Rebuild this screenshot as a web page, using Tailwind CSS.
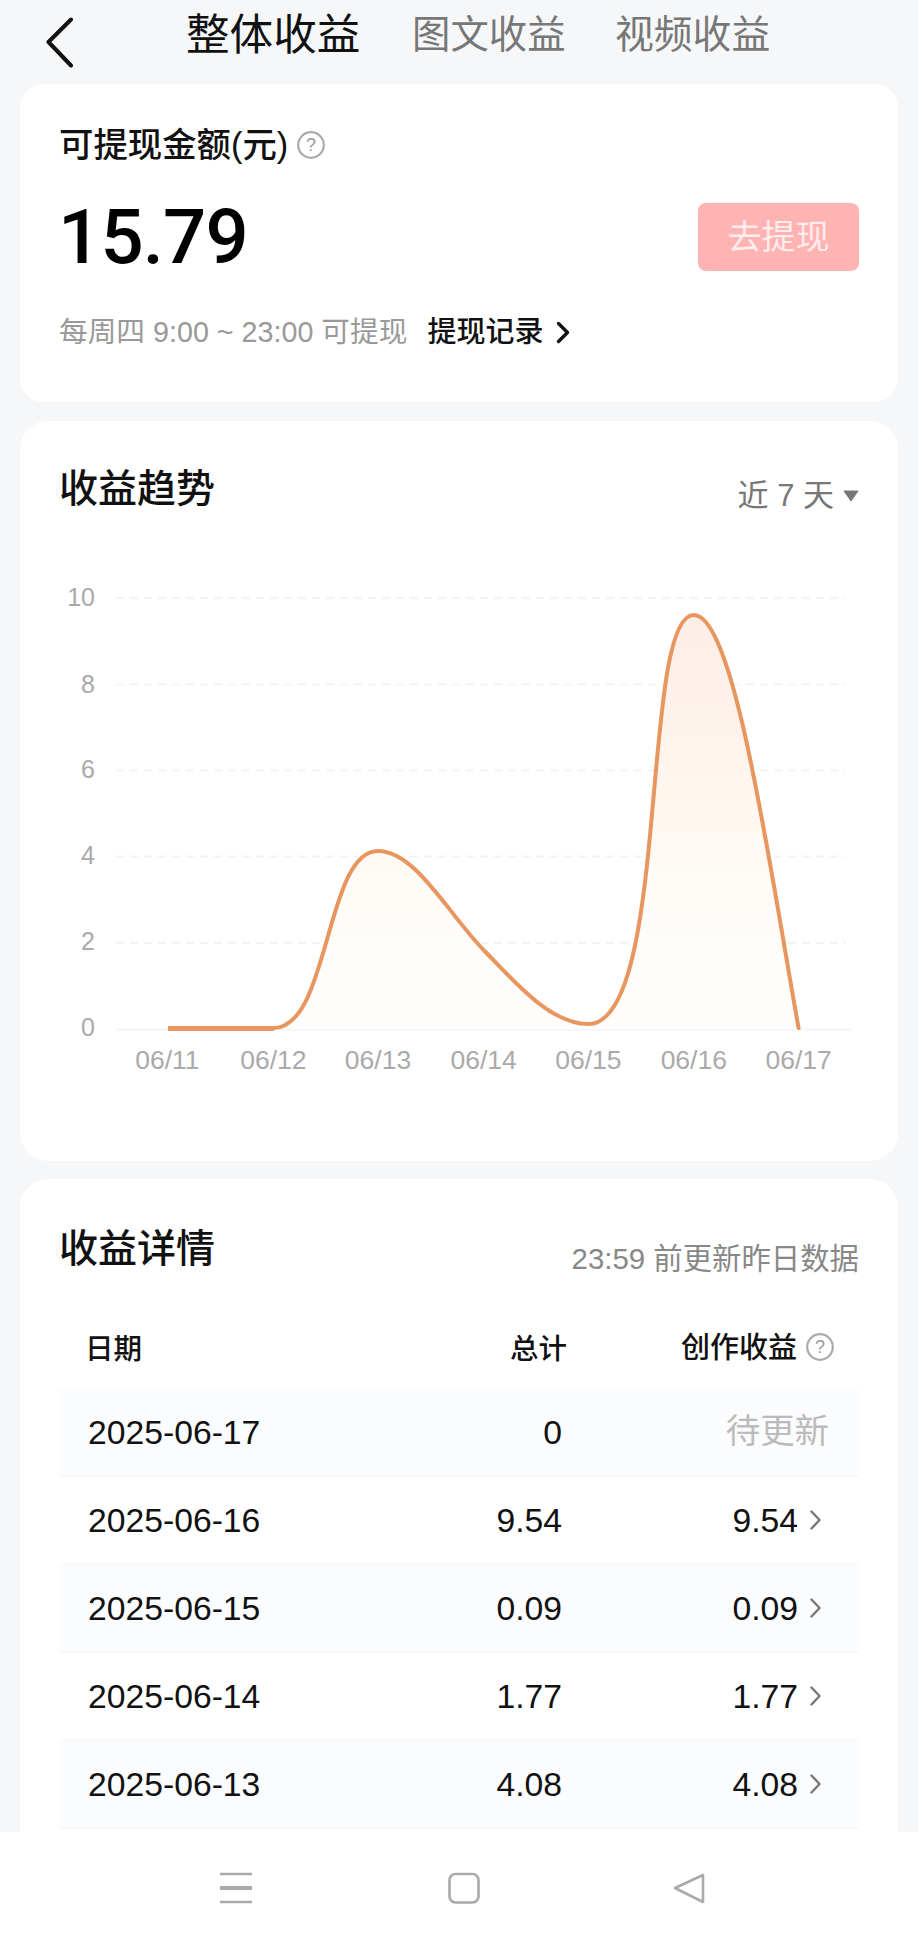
<!DOCTYPE html>
<html lang="zh-CN">
<head>
<meta charset="utf-8">
<script src="https://cdn.jsdelivr.net/npm/@tailwindcss/browser@4"></script>
<title>收益</title>
</head>
<body class="m-0">
<div class="relative w-[918px] h-[1944px] overflow-hidden bg-[#f6f7f9] text-black font-['Liberation_Sans','Noto_Sans_CJK_SC',sans-serif]">

  <header class="flex items-center h-[84px] pl-[46px]">
    <svg class="w-[27px] h-[51px] shrink-0" viewBox="0 0 27 51" fill="none" stroke="#111" stroke-width="4" stroke-linecap="round" stroke-linejoin="round"><path d="M25 2.5 L2.5 25 L25 48.5"/></svg>
    <nav class="flex items-center ml-[113px] mb-[14px]">
      <span class="w-[173px] text-[43.6px] leading-[50px] whitespace-nowrap text-[#111]">整体收益</span>
      <span class="ml-[53px] w-[154px] text-[38.4px] leading-[50px] whitespace-nowrap text-[#777]">图文收益</span>
      <span class="ml-[49px] w-[156px] text-[38.8px] leading-[50px] whitespace-nowrap text-[#777]">视频收益</span>
    </nav>
  </header>

  <section class="mx-5 h-[318px] rounded-[24px] bg-white pl-10 pr-[39px] pt-[44px]">
    <div class="flex items-center h-[34px]">
      <span class="-ml-[1px] text-[34.4px] leading-[34px] font-medium whitespace-nowrap text-[#111]">可提现金额(元)</span>
      <svg class="ml-[9px] w-[28px] h-[28px]" viewBox="0 0 28 28" fill="none"><circle cx="14" cy="14" r="12.8" stroke="#aaa" stroke-width="2.2"/><text x="14" y="20" text-anchor="middle" font-size="18" fill="#999">?</text></svg>
    </div>
    <div class="flex items-center justify-between h-[68px] mt-[41px]">
      <span class="-ml-[2px] text-[76px] leading-[68px] font-medium tracking-[-0.8px] font-['Roboto',sans-serif]">15.79</span>
      <button class="w-[161px] h-[68px] rounded-[8px] bg-[#ffb3b3] text-[34px] text-white/75">去提现</button>
    </div>
    <div class="flex items-center h-[28px] mt-[47px]">
      <span class="-ml-[1px] text-[28.7px] leading-[28px] text-[#999] whitespace-nowrap">每周四 9:00 ~ 23:00 可提现</span>
      <span class="ml-[20px] text-[29px] leading-[28px] font-medium text-[#111] whitespace-nowrap">提现记录</span>
      <svg class="ml-[13px] w-[14px] h-[23px]" viewBox="0 0 14 23" fill="none" stroke="#111" stroke-width="3.4" stroke-linecap="round" stroke-linejoin="round"><path d="M2.5 2.5 L11.5 11.5 L2.5 20.5"/></svg>
    </div>
  </section>

  <section class="mx-5 mt-[19px] h-[740px] rounded-[28px] bg-white">
    <div class="flex items-start justify-between pl-10 pr-[39px] pt-[49px] h-[85px]">
      <h2 class="-ml-[1px] text-[39px] leading-[38px] font-medium text-[#111]">收益趋势</h2>
      <div class="flex items-center mt-[11px] h-[30px]">
        <span class="text-[31px] leading-[30px] text-[#777] whitespace-nowrap">近 7 天</span>
        <svg class="ml-[9px] w-[16px] h-[12px]" viewBox="0 0 16 12" fill="#777"><path d="M1 1 H15 L8 11 Z" stroke="#777" stroke-width="1" stroke-linejoin="round"/></svg>
      </div>
    </div>
    <svg class="block mt-[54px]" width="878" height="540" viewBox="20 560 878 540">
      <defs>
        <linearGradient id="area" x1="0" y1="0" x2="0" y2="1">
          <stop offset="0" stop-color="#fdeee6"/>
          <stop offset="0.5" stop-color="#fff8f1"/>
          <stop offset="0.7" stop-color="#fffcf8"/>
          <stop offset="1" stop-color="#fffefc"/>
        </linearGradient>
      </defs>
      <g stroke="#f3f3f3" stroke-width="2" stroke-dasharray="8 6">
        <path d="M116 598 H846"/><path d="M116 684.5 H846"/><path d="M116 770.5 H846"/><path d="M116 856.5 H846"/><path d="M116 943 H846"/>
      </g>
      <path d="M116 1029.5 H851" stroke="#f4f4f4" stroke-width="2"/>
      <path fill="url(#area)" d="M273.4 1029 C330 1029 325 851 378 851 C415 851 447 912 483.6 950 C515 982 550 1024 588.4 1024 C670 1024 640 615 693.8 615 C735 615 770 870 798.6 1029 Z"/>
      <path fill="none" stroke="#e8965f" stroke-width="4" stroke-linecap="round" d="M273.4 1028 C330 1028 325 851 378 851 C415 851 447 912 483.6 950 C515 982 550 1024 588.4 1024 C670 1024 640 615 693.8 615 C735 615 770 870 798.6 1028"/>
      <path d="M168 1028.5 H274" stroke="#e8965f" stroke-width="4.8"/>
      <g fill="#aaa" font-size="25" text-anchor="end">
        <text x="95" y="606">10</text><text x="95" y="693">8</text><text x="95" y="778">6</text><text x="95" y="864">4</text><text x="95" y="950">2</text><text x="95" y="1036">0</text>
      </g>
      <g fill="#aaa" font-size="26.5" text-anchor="middle">
        <text x="167.4" y="1069">06/11</text><text x="273.4" y="1069">06/12</text><text x="378" y="1069">06/13</text><text x="483.6" y="1069">06/14</text><text x="588.4" y="1069">06/15</text><text x="693.8" y="1069">06/16</text><text x="798.6" y="1069">06/17</text>
      </g>
    </svg>
  </section>

  <section class="mx-5 mt-[18px] h-[800px] rounded-[28px] bg-white pl-10 pr-[39px] pt-[51px]">
    <div class="flex items-start justify-between h-[36px]">
      <h2 class="-ml-[1px] text-[39px] leading-[37px] font-medium text-[#111]">收益详情</h2>
      <span class="mt-[15px] text-[29.4px] leading-[28px] text-[#888] whitespace-nowrap">23:59 前更新昨日数据</span>
    </div>
    <div class="grid grid-cols-[240px_262px_297px] items-center h-[123px] text-[28.5px] font-medium text-[#111] pt-[43px]">
      <span class="pl-[25px]">日期</span>
      <span class="text-right -mr-[5px]">总计</span>
      <span class="flex items-center justify-end pr-[25px]">
        <span class="text-[29px]">创作收益</span>
        <svg class="ml-[9px] w-[28px] h-[28px] -mt-[4px]" viewBox="0 0 28 28" fill="none"><circle cx="14" cy="14" r="12.8" stroke="#aaa" stroke-width="2.2"/><text x="14" y="20" text-anchor="middle" font-size="18" font-weight="400" fill="#999">?</text></svg>
      </span>
    </div>

    <div class="grid grid-cols-[240px_262px_297px] items-center h-[88px] bg-[#fbfcfe] border-b-2 border-[#f8f8f9] text-[33.7px] text-[#111]">
      <span class="pl-[28px]">2025-06-17</span><span class="text-right">0</span>
      <span class="text-right pr-[30px] text-[34.4px] text-[#bbb]">待更新</span>
    </div>
    <div class="grid grid-cols-[240px_262px_297px] items-center h-[88px] border-b-2 border-[#fafafa] text-[33.7px] text-[#111]">
      <span class="pl-[28px]">2025-06-16</span><span class="text-right">9.54</span>
      <span class="flex items-center justify-end pr-[38px]">9.54<svg class="ml-[12px] w-[11px] h-[20px]" viewBox="0 0 11 20" fill="none" stroke="#777" stroke-width="2.4" stroke-linecap="round" stroke-linejoin="round"><path d="M1.5 1.5 L9.5 10 L1.5 18.5"/></svg></span>
    </div>
    <div class="grid grid-cols-[240px_262px_297px] items-center h-[88px] bg-[#fbfcfe] border-b-2 border-[#f8f8f9] text-[33.7px] text-[#111]">
      <span class="pl-[28px]">2025-06-15</span><span class="text-right">0.09</span>
      <span class="flex items-center justify-end pr-[38px]">0.09<svg class="ml-[12px] w-[11px] h-[20px]" viewBox="0 0 11 20" fill="none" stroke="#777" stroke-width="2.4" stroke-linecap="round" stroke-linejoin="round"><path d="M1.5 1.5 L9.5 10 L1.5 18.5"/></svg></span>
    </div>
    <div class="grid grid-cols-[240px_262px_297px] items-center h-[88px] border-b-2 border-[#fafafa] text-[33.7px] text-[#111]">
      <span class="pl-[28px]">2025-06-14</span><span class="text-right">1.77</span>
      <span class="flex items-center justify-end pr-[38px]">1.77<svg class="ml-[12px] w-[11px] h-[20px]" viewBox="0 0 11 20" fill="none" stroke="#777" stroke-width="2.4" stroke-linecap="round" stroke-linejoin="round"><path d="M1.5 1.5 L9.5 10 L1.5 18.5"/></svg></span>
    </div>
    <div class="grid grid-cols-[240px_262px_297px] items-center h-[88px] bg-[#fbfcfe] border-b-2 border-[#f8f8f9] text-[33.7px] text-[#111]">
      <span class="pl-[28px]">2025-06-13</span><span class="text-right">4.08</span>
      <span class="flex items-center justify-end pr-[38px]">4.08<svg class="ml-[12px] w-[11px] h-[20px]" viewBox="0 0 11 20" fill="none" stroke="#777" stroke-width="2.4" stroke-linecap="round" stroke-linejoin="round"><path d="M1.5 1.5 L9.5 10 L1.5 18.5"/></svg></span>
    </div>
  </section>

  <footer class="absolute left-0 right-0 bottom-0 h-[112px] bg-white">
    <svg class="absolute left-0 top-0" width="918" height="112" viewBox="0 1832 918 112" fill="none" stroke="#aaa">
      <path d="M220 1874 H252" stroke-width="2.5"/><path d="M220 1888 H252" stroke-width="4"/><path d="M220 1902 H252" stroke-width="2.5"/>
      <rect x="449.5" y="1874" width="29" height="28.5" rx="6" stroke-width="2.6"/>
      <path d="M703 1875 V1902 L675 1888 Z" stroke-width="2.6" stroke-linejoin="round"/>
    </svg>
  </footer>
</div>
</body>
</html>
